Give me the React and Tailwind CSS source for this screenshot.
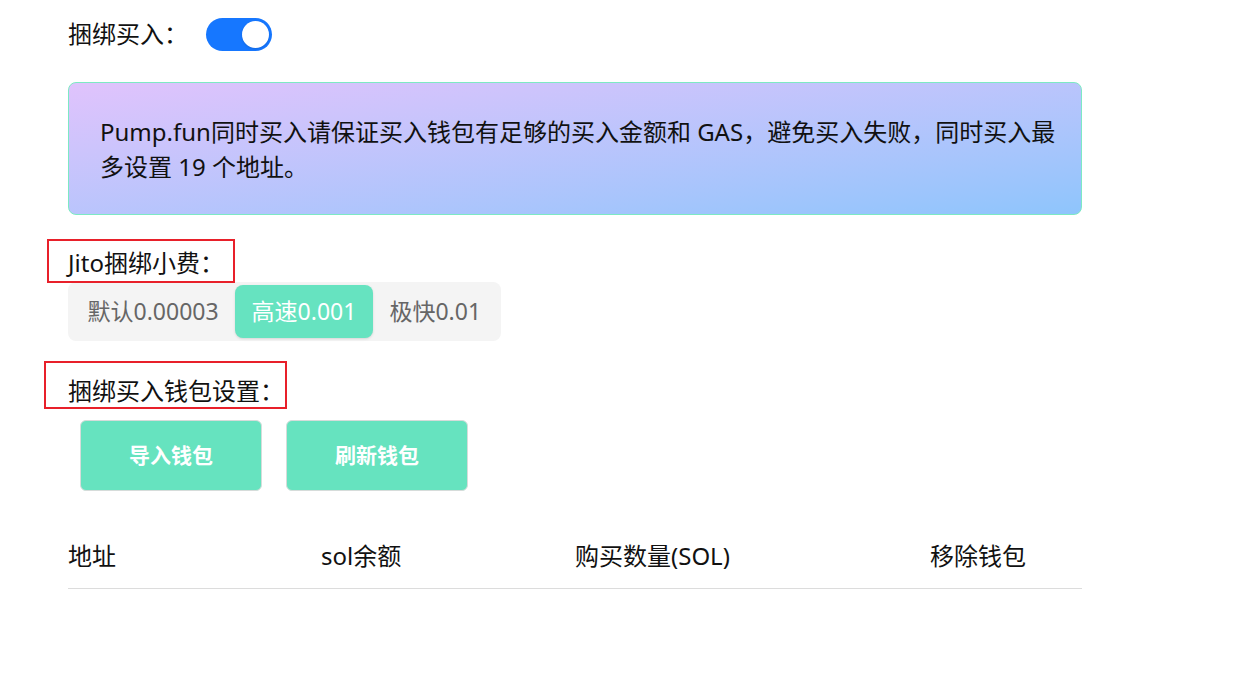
import { useState } from 'react'

const FONT = { fontFamily: '"Noto Sans", "Noto Sans CJK SC", sans-serif' }

// red annotation frame drawn over a label
const Marked = ({ children, box }) => (
  <div className="relative inline-block">
    <span className={`absolute border-2 border-[#e8202a] pointer-events-none ${box}`} />
    {children}
  </div>
)

const fees = [
  { key: 'default', label: '默认0.00003' },
  { key: 'fast', label: '高速0.001' },
  { key: 'turbo', label: '极快0.01' },
]

export default function App() {
  const [bundle, setBundle] = useState(true)
  const [fee, setFee] = useState('fast')

  return (
    <div className="min-h-screen bg-white text-[#111] px-[68px]" style={FONT}>
      {/* toggle row */}
      <div className="flex items-center h-[52px] pt-[16px]">
        <span className="w-[138px] text-[24px] leading-8">捆绑买入：</span>
        <button
          onClick={() => setBundle(!bundle)}
          className={`w-[66px] h-[33px] rounded-full p-[3px] flex ${bundle ? 'bg-[#1677ff] justify-end' : 'bg-gray-300 justify-start'}`}
        >
          <span className="w-[27px] h-[27px] rounded-full bg-white shadow" />
        </button>
      </div>

      {/* notice */}
      <div className="mt-[30px] w-[1014px] h-[133px] rounded-lg border border-[#7de9c4] bg-gradient-to-br from-[#e0c3fc] to-[#8ec5fc] pl-[31px] pr-[20px] pt-[31px]">
        <p className="text-[24px] leading-[35px]">
          Pump.fun同时买入请保证买入钱包有足够的买入金额和 GAS，避免买入失败，同时买入最多设置 19 个地址。
        </p>
      </div>

      {/* jito fee */}
      <div className="mt-[32px]">
        <Marked box="-left-[21px] -top-[8px] w-[188px] h-[44px]">
          <span className="text-[24px] leading-[32px] block">Jito捆绑小费：</span>
        </Marked>
      </div>
      <div className="inline-flex bg-[#f4f4f4] rounded-lg p-[3px] mt-[3px]">
        {fees.map(f => (
          <button
            key={f.key}
            onClick={() => setFee(f.key)}
            className={`h-[53px] px-[16.5px] rounded-lg text-[23px] ${fee === f.key ? 'bg-[#66e3c0] text-white shadow-sm' : 'text-[#666]'}`}
          >
            {f.label}
          </button>
        ))}
      </div>

      {/* wallet settings */}
      <div className="mt-[34px]">
        <Marked box="-left-[24px] -top-[14px] w-[243px] h-[48px]">
          <span className="text-[24px] leading-[32px] block">捆绑买入钱包设置：</span>
        </Marked>
      </div>
      <div className="flex gap-[24px] ml-[12px] mt-[13px]">
        <button className="w-[182px] h-[71px] rounded-md bg-[#66e3bf] border border-[#d6dcda] text-white font-bold text-[21px]">
          导入钱包
        </button>
        <button className="w-[182px] h-[71px] rounded-md bg-[#66e3bf] border border-[#d6dcda] text-white font-bold text-[21px]">
          刷新钱包
        </button>
      </div>

      {/* wallet table */}
      <div className="mt-[33px] w-[1014px] grid grid-cols-[253px_254px_355px_1fr] border-b border-[#dcdcdc] text-[24px] leading-8 py-[16px]">
        <span>地址</span>
        <span>sol余额</span>
        <span>购买数量(SOL)</span>
        <span>移除钱包</span>
      </div>
    </div>
  )
}
